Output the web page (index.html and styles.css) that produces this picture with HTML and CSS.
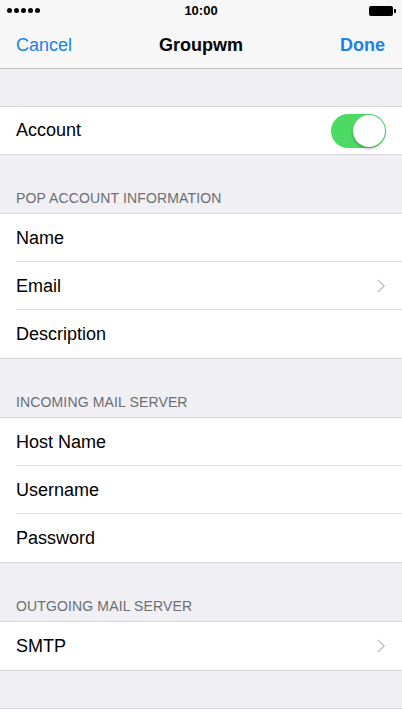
FILE: index.html
```html
<!DOCTYPE html>
<html lang="en">
<head>
  <meta charset="UTF-8">
  <title>Groupwm</title>
  <meta name="viewport" content="width=device-width, initial-scale=1.0">
  <link rel="stylesheet" href="styles.css">
</head>
<body>
  <div class="top">
    <!-- Status bar -->
    <div class="status-bar">
      <div class="signal">
        <span></span><span></span><span></span><span></span><span></span>
      </div>
      <div class="clock">10:00</div>
      <div class="battery"><span class="battery-body"></span><span class="battery-nub"></span></div>
    </div>
    <!-- Navigation bar -->
    <div class="nav-bar">
      <span class="nav-btn">Cancel</span>
      <span class="nav-title">Groupwm</span>
      <span class="nav-btn done">Done</span>
    </div>
  </div>

  <div class="gap"></div>
  <div class="group">
    <div class="row single">
      <span class="label">Account</span>
      <span class="toggle"><span class="knob"></span></span>
    </div>
  </div>

  <div class="section-header">POP ACCOUNT INFORMATION</div>
  <div class="group">
    <div class="row"><span class="label">Name</span></div>
    <div class="row">
      <span class="label">Email</span>
      <svg class="chevron" viewBox="0 0 8 14" width="8" height="14"><path d="M1 1l6 6-6 6" fill="none" stroke="#c7c7cc" stroke-width="1.6"/></svg>
    </div>
    <div class="row"><span class="label">Description</span></div>
  </div>

  <div class="section-header">INCOMING MAIL SERVER</div>
  <div class="group">
    <div class="row"><span class="label">Host Name</span></div>
    <div class="row"><span class="label">Username</span></div>
    <div class="row"><span class="label">Password</span></div>
  </div>

  <div class="section-header">OUTGOING MAIL SERVER</div>
  <div class="group">
    <div class="row">
      <span class="label">SMTP</span>
      <svg class="chevron" viewBox="0 0 8 14" width="8" height="14"><path d="M1 1l6 6-6 6" fill="none" stroke="#c7c7cc" stroke-width="1.6"/></svg>
    </div>
  </div>

  <div class="gap"></div>
  <div class="group tail"></div>
</body>
</html>
```

FILE: styles.css
```css
html, body {
  margin: 0;
  padding: 0;
  background: #efeff4;
  font-family: 'Liberation Sans', Arial, sans-serif;
  color: #000;
  width: 402px;
  overflow: hidden;
}
.top {
  background: #f7f7f7;
  border-bottom: 1px solid #c4c4c8;
}
.status-bar {
  height: 21px;
  display: flex;
  align-items: center;
  justify-content: space-between;
  padding: 0 6px 0 7px;
  position: relative;
}
.signal {
  display: flex;
  gap: 2px;
}
.signal span {
  width: 5px;
  height: 5px;
  border-radius: 50%;
  background: #000;
}
.clock {
  position: absolute;
  left: 0;
  right: 0;
  text-align: center;
  font-size: 13px;
  font-weight: 700;
  line-height: 21px;
}
.battery {
  display: flex;
  align-items: center;
}
.battery-body {
  width: 24px;
  height: 10px;
  background: #000;
  border-radius: 2px;
}
.battery-nub {
  width: 2px;
  height: 4px;
  background: #000;
  border-radius: 0 1px 1px 0;
  margin-left: 1px;
}
.nav-bar {
  height: 47px;
  box-sizing: border-box;
  padding: 2px 17px 0 16px;
  display: flex;
  align-items: center;
  justify-content: space-between;
  position: relative;
}
.nav-btn {
  font-size: 18px;
  color: #1a82e8;
}
.nav-btn.done {
  font-weight: 700;
}
.nav-title {
  position: absolute;
  left: 0;
  right: 0;
  text-align: center;
  font-size: 18px;
  font-weight: 700;
  pointer-events: none;
}
.gap {
  height: 37px;
}
.group {
  background: #fff;
  border-top: 1px solid #d6d6da;
  border-bottom: 1px solid #d6d6da;
}
.row {
  height: 48px;
  display: flex;
  align-items: center;
  justify-content: space-between;
  padding: 0 16px;
  position: relative;
}
.row.single {
  height: 47px;
}
.row + .row::before {
  content: "";
  position: absolute;
  top: -1px;
  left: 16px;
  right: 0;
  height: 1px;
  background: #e0e0e4;
}
.label {
  font-size: 18px;
}
.chevron {
  margin-right: 1px;
}
.section-header {
  height: 58px;
  box-sizing: border-box;
  display: flex;
  align-items: flex-end;
  padding: 0 16px 7px;
  font-size: 14px;
  color: #6d6d72;
  letter-spacing: 0.01em;
}
.toggle {
  width: 55px;
  height: 34px;
  border-radius: 17px;
  background: #4cd964;
  display: flex;
  align-items: center;
  justify-content: flex-end;
  padding: 1px;
  box-sizing: border-box;
}
.knob {
  width: 32px;
  height: 32px;
  border-radius: 50%;
  background: #fff;
  box-shadow: 0 2px 3px rgba(0, 0, 0, 0.25);
}
.group.tail {
  height: 40px;
  border-bottom: none;
}
```
